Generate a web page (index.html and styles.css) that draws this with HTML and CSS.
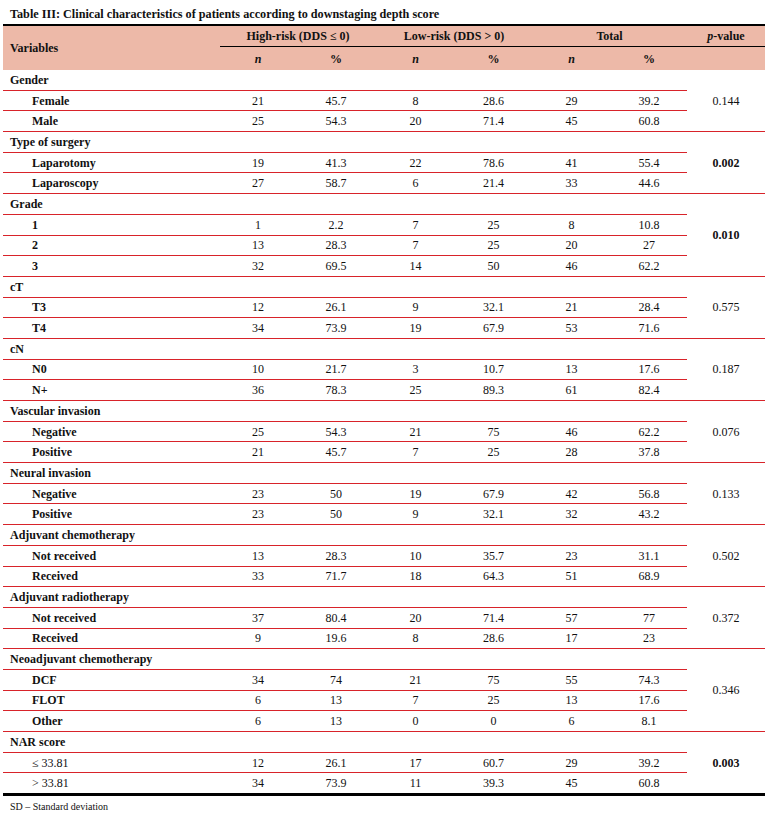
FILE: index.html
```html
<!DOCTYPE html>
<html>
<head>
<meta charset="utf-8">
<link rel="stylesheet" href="styles.css">
</head>
<body>
<div class="page">
  <div class="title">Table III: Clinical characteristics of patients according to downstaging depth score</div>
  <table class="tbl">
    <colgroup>
      <col class="c-var"><col class="c1"><col class="c2"><col class="c3"><col class="c4"><col class="c5"><col class="c6"><col class="c7">
    </colgroup>
    <thead>
      <tr class="h1">
        <th rowspan="2" class="hvar">Variables</th>
        <th colspan="2" class="grp">High-risk (DDS ≤ 0)</th>
        <th colspan="2" class="grp">Low-risk (DDS &gt; 0)</th>
        <th colspan="2" class="grp">Total</th>
        <th class="grp"><i>p</i>-value</th>
      </tr>
      <tr class="h2">
        <th><i>n</i></th><th>%</th><th><i>n</i></th><th>%</th><th><i>n</i></th><th>%</th><th></th>
      </tr>
    </thead>
    <tbody>
      <tr class="g"><td class="gl">Gender</td><td colspan="6"></td><td rowspan="3" class="p">0.144</td></tr>
      <tr class="s"><td class="sl">Female</td><td>21</td><td>45.7</td><td>8</td><td>28.6</td><td>29</td><td>39.2</td></tr>
      <tr class="s last"><td class="sl">Male</td><td>25</td><td>54.3</td><td>20</td><td>71.4</td><td>45</td><td>60.8</td></tr>

      <tr class="g"><td class="gl">Type of surgery</td><td colspan="6"></td><td rowspan="3" class="p b">0.002</td></tr>
      <tr class="s"><td class="sl">Laparotomy</td><td>19</td><td>41.3</td><td>22</td><td>78.6</td><td>41</td><td>55.4</td></tr>
      <tr class="s last"><td class="sl">Laparoscopy</td><td>27</td><td>58.7</td><td>6</td><td>21.4</td><td>33</td><td>44.6</td></tr>

      <tr class="g"><td class="gl">Grade</td><td colspan="6"></td><td rowspan="4" class="p b">0.010</td></tr>
      <tr class="s"><td class="sl">1</td><td>1</td><td>2.2</td><td>7</td><td>25</td><td>8</td><td>10.8</td></tr>
      <tr class="s"><td class="sl">2</td><td>13</td><td>28.3</td><td>7</td><td>25</td><td>20</td><td>27</td></tr>
      <tr class="s last"><td class="sl">3</td><td>32</td><td>69.5</td><td>14</td><td>50</td><td>46</td><td>62.2</td></tr>

      <tr class="g"><td class="gl">cT</td><td colspan="6"></td><td rowspan="3" class="p">0.575</td></tr>
      <tr class="s"><td class="sl">T3</td><td>12</td><td>26.1</td><td>9</td><td>32.1</td><td>21</td><td>28.4</td></tr>
      <tr class="s last"><td class="sl">T4</td><td>34</td><td>73.9</td><td>19</td><td>67.9</td><td>53</td><td>71.6</td></tr>

      <tr class="g"><td class="gl">cN</td><td colspan="6"></td><td rowspan="3" class="p">0.187</td></tr>
      <tr class="s"><td class="sl">N0</td><td>10</td><td>21.7</td><td>3</td><td>10.7</td><td>13</td><td>17.6</td></tr>
      <tr class="s last"><td class="sl">N+</td><td>36</td><td>78.3</td><td>25</td><td>89.3</td><td>61</td><td>82.4</td></tr>

      <tr class="g"><td class="gl">Vascular invasion</td><td colspan="6"></td><td rowspan="3" class="p">0.076</td></tr>
      <tr class="s"><td class="sl">Negative</td><td>25</td><td>54.3</td><td>21</td><td>75</td><td>46</td><td>62.2</td></tr>
      <tr class="s last"><td class="sl">Positive</td><td>21</td><td>45.7</td><td>7</td><td>25</td><td>28</td><td>37.8</td></tr>

      <tr class="g"><td class="gl">Neural invasion</td><td colspan="6"></td><td rowspan="3" class="p">0.133</td></tr>
      <tr class="s"><td class="sl">Negative</td><td>23</td><td>50</td><td>19</td><td>67.9</td><td>42</td><td>56.8</td></tr>
      <tr class="s last"><td class="sl">Positive</td><td>23</td><td>50</td><td>9</td><td>32.1</td><td>32</td><td>43.2</td></tr>

      <tr class="g"><td class="gl">Adjuvant chemotherapy</td><td colspan="6"></td><td rowspan="3" class="p">0.502</td></tr>
      <tr class="s"><td class="sl">Not received</td><td>13</td><td>28.3</td><td>10</td><td>35.7</td><td>23</td><td>31.1</td></tr>
      <tr class="s last"><td class="sl">Received</td><td>33</td><td>71.7</td><td>18</td><td>64.3</td><td>51</td><td>68.9</td></tr>

      <tr class="g"><td class="gl">Adjuvant radiotherapy</td><td colspan="6"></td><td rowspan="3" class="p">0.372</td></tr>
      <tr class="s"><td class="sl">Not received</td><td>37</td><td>80.4</td><td>20</td><td>71.4</td><td>57</td><td>77</td></tr>
      <tr class="s last"><td class="sl">Received</td><td>9</td><td>19.6</td><td>8</td><td>28.6</td><td>17</td><td>23</td></tr>

      <tr class="g"><td class="gl">Neoadjuvant chemotherapy</td><td colspan="6"></td><td rowspan="4" class="p">0.346</td></tr>
      <tr class="s"><td class="sl">DCF</td><td>34</td><td>74</td><td>21</td><td>75</td><td>55</td><td>74.3</td></tr>
      <tr class="s"><td class="sl">FLOT</td><td>6</td><td>13</td><td>7</td><td>25</td><td>13</td><td>17.6</td></tr>
      <tr class="s last"><td class="sl">Other</td><td>6</td><td>13</td><td>0</td><td>0</td><td>6</td><td>8.1</td></tr>

      <tr class="g"><td class="gl">NAR score</td><td colspan="6"></td><td rowspan="3" class="p b final">0.003</td></tr>
      <tr class="s"><td class="sl reg">≤ 33.81</td><td>12</td><td>26.1</td><td>17</td><td>60.7</td><td>29</td><td>39.2</td></tr>
      <tr class="s final"><td class="sl reg">&gt; 33.81</td><td>34</td><td>73.9</td><td>11</td><td>39.3</td><td>45</td><td>60.8</td></tr>
    </tbody>
  </table>
  <div class="note">SD – Standard deviation</div>
</div>
</body>
</html>
```
FILE: styles.css
```css
html, body {
  margin: 0;
  padding: 0;
  background: #fff;
}
body {
  font-family: "Liberation Serif", "Times New Roman", serif;
  color: #111;
}
.page {
  padding: 0 7px 0 3px;
}
.title {
  height: 24px;
  box-sizing: border-box;
  padding: 6px 0 0 7px;
  font-size: 12.2px;
  line-height: 16px;
  font-weight: bold;
}
.tbl {
  width: 762px;
  border-collapse: separate;
  border-spacing: 0;
  table-layout: fixed;
  border-top: 2px solid #000;
  font-size: 12px;
}
.c-var { width: 217px; }
.c1 { width: 76px; }
.c2 { width: 80px; }
.c3 { width: 79px; }
.c4 { width: 77px; }
.c5 { width: 79px; }
.c6 { width: 76px; }
.c7 { width: 78px; }
.tbl th {
  background: #edb9a8;
  font-weight: bold;
  text-align: center;
  padding: 0;
  line-height: 14px;
}
.h1 th {
  height: 20px;
}
.h1 .grp {
  border-bottom: 1px solid #000;
}
.h1 .hvar {
  text-align: left;
  padding-left: 7px;
  border-bottom: 0;
}
.h2 th {
  height: 23px;
}
.tbl td {
  padding: 0;
  text-align: center;
  height: 19.7px;
  line-height: 14px;
}
.tbl .gl {
  text-align: left;
  padding-left: 7px;
  font-weight: bold;
}
.tbl .sl {
  text-align: left;
  padding-left: 29px;
  font-weight: bold;
}
.tbl .sl.reg {
  font-weight: normal;
}
.g td {
  border-bottom: 1px solid #d8232a;
}
.s td {
  border-bottom: 1px solid #d8232a;
}
.tbl td.p {
  border-bottom: 1px solid #d8232a;
  vertical-align: middle;
}
.tbl td.p.b {
  font-weight: bold;
}
.tbl td.p.final,
.s.final td {
  border-bottom: 3px solid #000;
}
.note {
  padding: 4px 0 0 7px;
  font-size: 10px;
  line-height: 14px;
}
```
